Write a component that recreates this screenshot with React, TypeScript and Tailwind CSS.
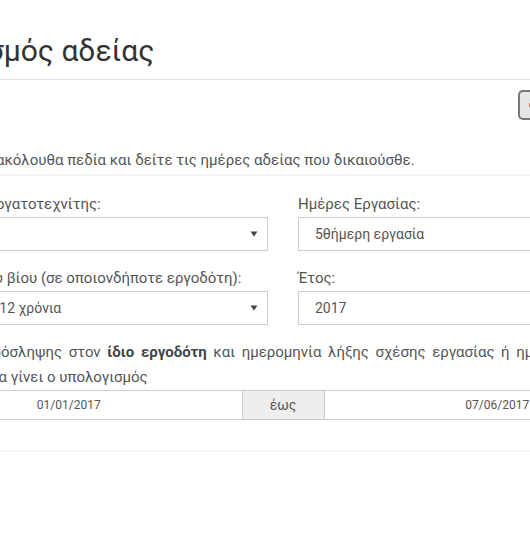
import React from "react";

function Arrow() {
  return (
    <svg width="8" height="6" viewBox="0 0 8 6" className="shrink-0">
      <path d="M0.5 0.5 L7.5 0.5 L4 5.5 Z" fill="#444" />
    </svg>
  );
}

function SelectBox({ value }: { value: string }) {
  return (
    <div className="flex h-[34px] items-center justify-between border border-[#ccc] bg-white pl-[16px] pr-[9px] text-[14px] text-[#555]">
      <span className="whitespace-nowrap">{value}</span>
      <Arrow />
    </div>
  );
}

function InputBox({ value }: { value: string }) {
  return (
    <div className="flex h-[34px] items-center border border-[#ccc] bg-white pl-[16px] text-[14px] text-[#555]">
      <span className="whitespace-nowrap">{value}</span>
    </div>
  );
}

export default function App() {
  return (
    <div className="h-[542px] w-[530px] overflow-hidden bg-white font-['Roboto','Liberation_Sans',sans-serif] text-[15px] text-[#555]">
      <div className="ml-[-105px] w-[776px]">
        <div className="border-b border-[#e5e5e5] pb-[12px] pt-[34px]">
          <h1 className="ml-[-19px] whitespace-nowrap text-[30px] leading-[33px] text-[#333]">Υπολογισμός αδείας</h1>
        </div>

        <div className="flex justify-end pt-[10px]">
          <button
            type="button"
            className="flex h-[30px] w-[153px] items-center gap-[6px] rounded-[5px] border-2 border-[#777] bg-[#e6e6e6] pl-[9px] text-[14px] text-[#333]"
          >
            <svg width="12" height="12" viewBox="0 0 12 12" className="shrink-0">
              <circle cx="6" cy="6" r="5" fill="none" stroke="#c0392b" strokeWidth="1.5" />
              <path d="M6 3.5 V6.5 M6 8 V8.8" stroke="#c0392b" strokeWidth="1.5" />
            </svg>
            <span className="whitespace-nowrap">Οδηγίες χρήσης</span>
          </button>
        </div>

        <p className="ml-[-19px] mt-[30px] whitespace-nowrap border-b-2 border-[#f4f4f4] pb-[4px] leading-[20px]">
          Συμπληρώστε τα ακόλουθα πεδία και δείτε τις ημέρες αδείας που δικαιούσθε.
        </p>

        <div className="mt-[17px] grid grid-cols-2 gap-x-[30px]">
          <div className="mb-[16px]">
            <div className="mb-[2px] whitespace-nowrap leading-[22px]">Υπάλληλος ή Εργατοτεχνίτης:</div>
            <SelectBox value="Υπάλληλος" />
          </div>
          <div className="mb-[16px]">
            <div className="mb-[2px] whitespace-nowrap leading-[22px]">Ημέρες Εργασίας:</div>
            <SelectBox value="5θήμερη εργασία" />
          </div>
          <div className="mb-[15px]">
            <div className="mb-[2px] ml-[-12px] whitespace-nowrap leading-[22px]">Προϋπηρεσία του βίου (σε οποιονδήποτε εργοδότη):</div>
            <SelectBox value="Από 10 μέχρι 12 χρόνια" />
          </div>
          <div className="mb-[15px]">
            <div className="mb-[2px] whitespace-nowrap leading-[22px]">Έτος:</div>
            <InputBox value="2017" />
          </div>
        </div>

        <div className="leading-[25px]">
          <div className="text-justify [text-align-last:justify]">
            Ημερομηνία πρόσληψης στον <b className="font-bold text-[#444]">ίδιο εργοδότη</b> και ημερομηνία λήξης σχέσης εργασίας ή ημερομηνία αναφοράς
          </div>
          <div className="whitespace-nowrap">για την οποία θα γίνει ο υπολογισμός</div>
        </div>

        <div className="flex h-[30px] text-[12px]">
          <div className="flex flex-1 items-center justify-center border border-[#ccc] bg-white">01/01/2017</div>
          <div className="flex w-[81px] items-center justify-center border-y border-[#ccc] bg-[#eee] text-[14px]">έως</div>
          <div className="flex flex-1 items-center justify-center border border-[#ccc] bg-white">07/06/2017</div>
        </div>

        <div className="mt-[30px] border-b-2 border-[#f5f5f5]" />
      </div>
    </div>
  );
}
